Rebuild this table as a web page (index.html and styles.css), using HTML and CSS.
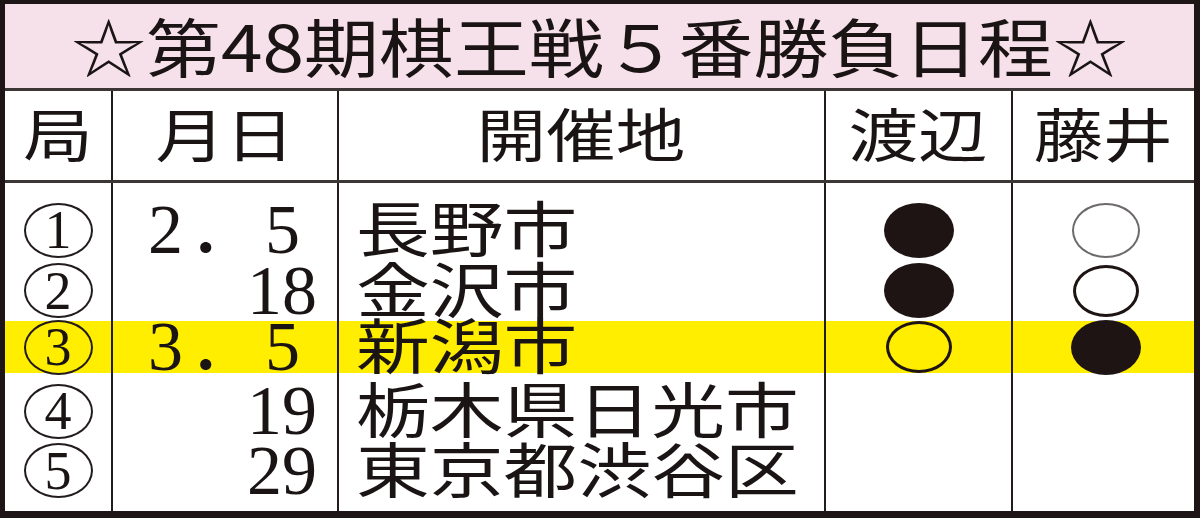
FILE: index.html
```html
<!DOCTYPE html>
<html lang="ja">
<head>
<meta charset="utf-8">
<title>第48期棋王戦５番勝負日程</title>
<link rel="stylesheet" href="styles.css">
</head>
<body>
<div class="board">
  <div class="title"><span class="title-text">☆第48期棋王戦５番勝負日程☆</span></div>

  <div class="row head">
    <div class="cell center"><span class="jp h">局</span></div>
    <div class="cell center"><span class="jp h">月日</span></div>
    <div class="cell center"><span class="jp h">開催地</span></div>
    <div class="cell center"><span class="jp h">渡辺</span></div>
    <div class="cell center"><span class="jp h">藤井</span></div>
  </div>

  <div class="row body r1">
    <div class="cell center"><span class="num">1</span></div>
    <div class="cell date-full"><span class="d">2．5</span></div>
    <div class="cell place"><span class="jp p">長野市</span></div>
    <div class="cell center"><span class="stone black"></span></div>
    <div class="cell center res2"><span class="stone white thin"></span></div>
  </div>

  <div class="row body r2">
    <div class="cell center"><span class="num">2</span></div>
    <div class="cell date-day"><span class="d">18</span></div>
    <div class="cell place"><span class="jp p">金沢市</span></div>
    <div class="cell center"><span class="stone black"></span></div>
    <div class="cell center res2"><span class="stone white small"></span></div>
  </div>

  <div class="row body r3">
    <div class="cell center"><span class="num">3</span></div>
    <div class="cell date-full"><span class="d">3．5</span></div>
    <div class="cell place"><span class="jp p">新潟市</span></div>
    <div class="cell center"><span class="stone white small"></span></div>
    <div class="cell center res2"><span class="stone black"></span></div>
  </div>

  <div class="row body r4">
    <div class="cell center"><span class="num">4</span></div>
    <div class="cell date-day"><span class="d">19</span></div>
    <div class="cell place"><span class="jp p">栃木県日光市</span></div>
    <div class="cell"></div>
    <div class="cell"></div>
  </div>

  <div class="row body r5">
    <div class="cell center"><span class="num">5</span></div>
    <div class="cell date-day"><span class="d">29</span></div>
    <div class="cell place"><span class="jp p">東京都渋谷区</span></div>
    <div class="cell"></div>
    <div class="cell"></div>
  </div>
</div>
</body>
</html>
```

FILE: styles.css
```css
html, body {
  margin: 0;
  padding: 0;
}

body {
  width: 1200px;
  height: 518px;
  overflow: hidden;
  background: #ffffff;
  color: #1a1414;
  font-family: "Noto Sans CJK JP", "Noto Sans", sans-serif;
}

.board {
  box-sizing: border-box;
  width: 1200px;
  height: 518px;
  border-style: solid;
  border-color: #1e1616;
  border-width: 4px 6px 7px 5px;
  display: flex;
  flex-direction: column;
  background: #ffffff;
}

.title {
  height: 84px;
  flex: none;
  background: #f6e1ea;
  border-bottom: 3px solid #3c3636;
  display: flex;
  align-items: center;
  justify-content: center;
}

.title-text {
  display: inline-block;
  font-size: 64px;
  font-weight: 400;
  line-height: 1;
  white-space: nowrap;
  transform: translateY(-2px) scaleX(1.17);
  transform-origin: center;
}

.row {
  display: grid;
  grid-template-columns: 106px 226px 487px 187px 183px;
  grid-template-rows: minmax(0, 1fr);
  flex: none;
}

.cell {
  box-sizing: border-box;
  min-height: 0;
  border-left: 2px solid #231c1c;
  display: flex;
  align-items: center;
}

.cell:first-child {
  border-left: 0;
}

.center {
  justify-content: center;
}

.head {
  box-sizing: border-box;
  height: 92px;
  border-bottom: 3px solid #3c3636;
}

.jp {
  display: inline-block;
  white-space: nowrap;
}

.jp.h {
  font-size: 58px;
  line-height: 1;
  transform: translateY(-4px) scaleX(1.2);
  transform-origin: center;
}

.jp.p {
  font-size: 60px;
  line-height: 48px;
  transform: translateY(-4px) scaleX(1.23);
  transform-origin: left center;
}

.place {
  padding-left: 17px;
}

.d {
  display: inline-block;
  font-family: "Liberation Serif", "Noto Sans CJK JP", serif;
  font-size: 70px;
  line-height: 48px;
  white-space: nowrap;
}

.date-full {
  padding-left: 35px;
}

.date-full .d {
  letter-spacing: 6px;
}

.date-day {
  justify-content: flex-end;
  padding-right: 20px;
}

.res2 {
  padding-left: 5px;
}

.num {
  box-sizing: border-box;
  width: 69px;
  height: 55px;
  border: 2px solid #231c1c;
  border-radius: 50%;
  display: flex;
  align-items: center;
  justify-content: center;
  font-family: "Liberation Serif", serif;
  font-size: 54px;
  line-height: 1;
}

.stone {
  box-sizing: border-box;
  display: block;
  flex: none;
  width: 70px;
  height: 55px;
  border-radius: 50%;
}

.stone.black {
  background: #1e1414;
}

.stone.white {
  border: 3px solid #1e1414;
}

.stone.white.thin {
  width: 68px;
  border: 2px solid #6e6a6a;
}

.stone.white.small {
  width: 66px;
  height: 52px;
}

.r1 {
  height: 77px;
}

.r1 .cell {
  padding-top: 17px;
}

.r2 {
  height: 61px;
}

.r3 {
  height: 52px;
  background: #ffee00;
}

.r4 {
  height: 68px;
}

.r4 .cell {
  padding-top: 8px;
}

.r5 {
  flex: 1;
}

.r5 .cell {
  padding-bottom: 11px;
}
```
